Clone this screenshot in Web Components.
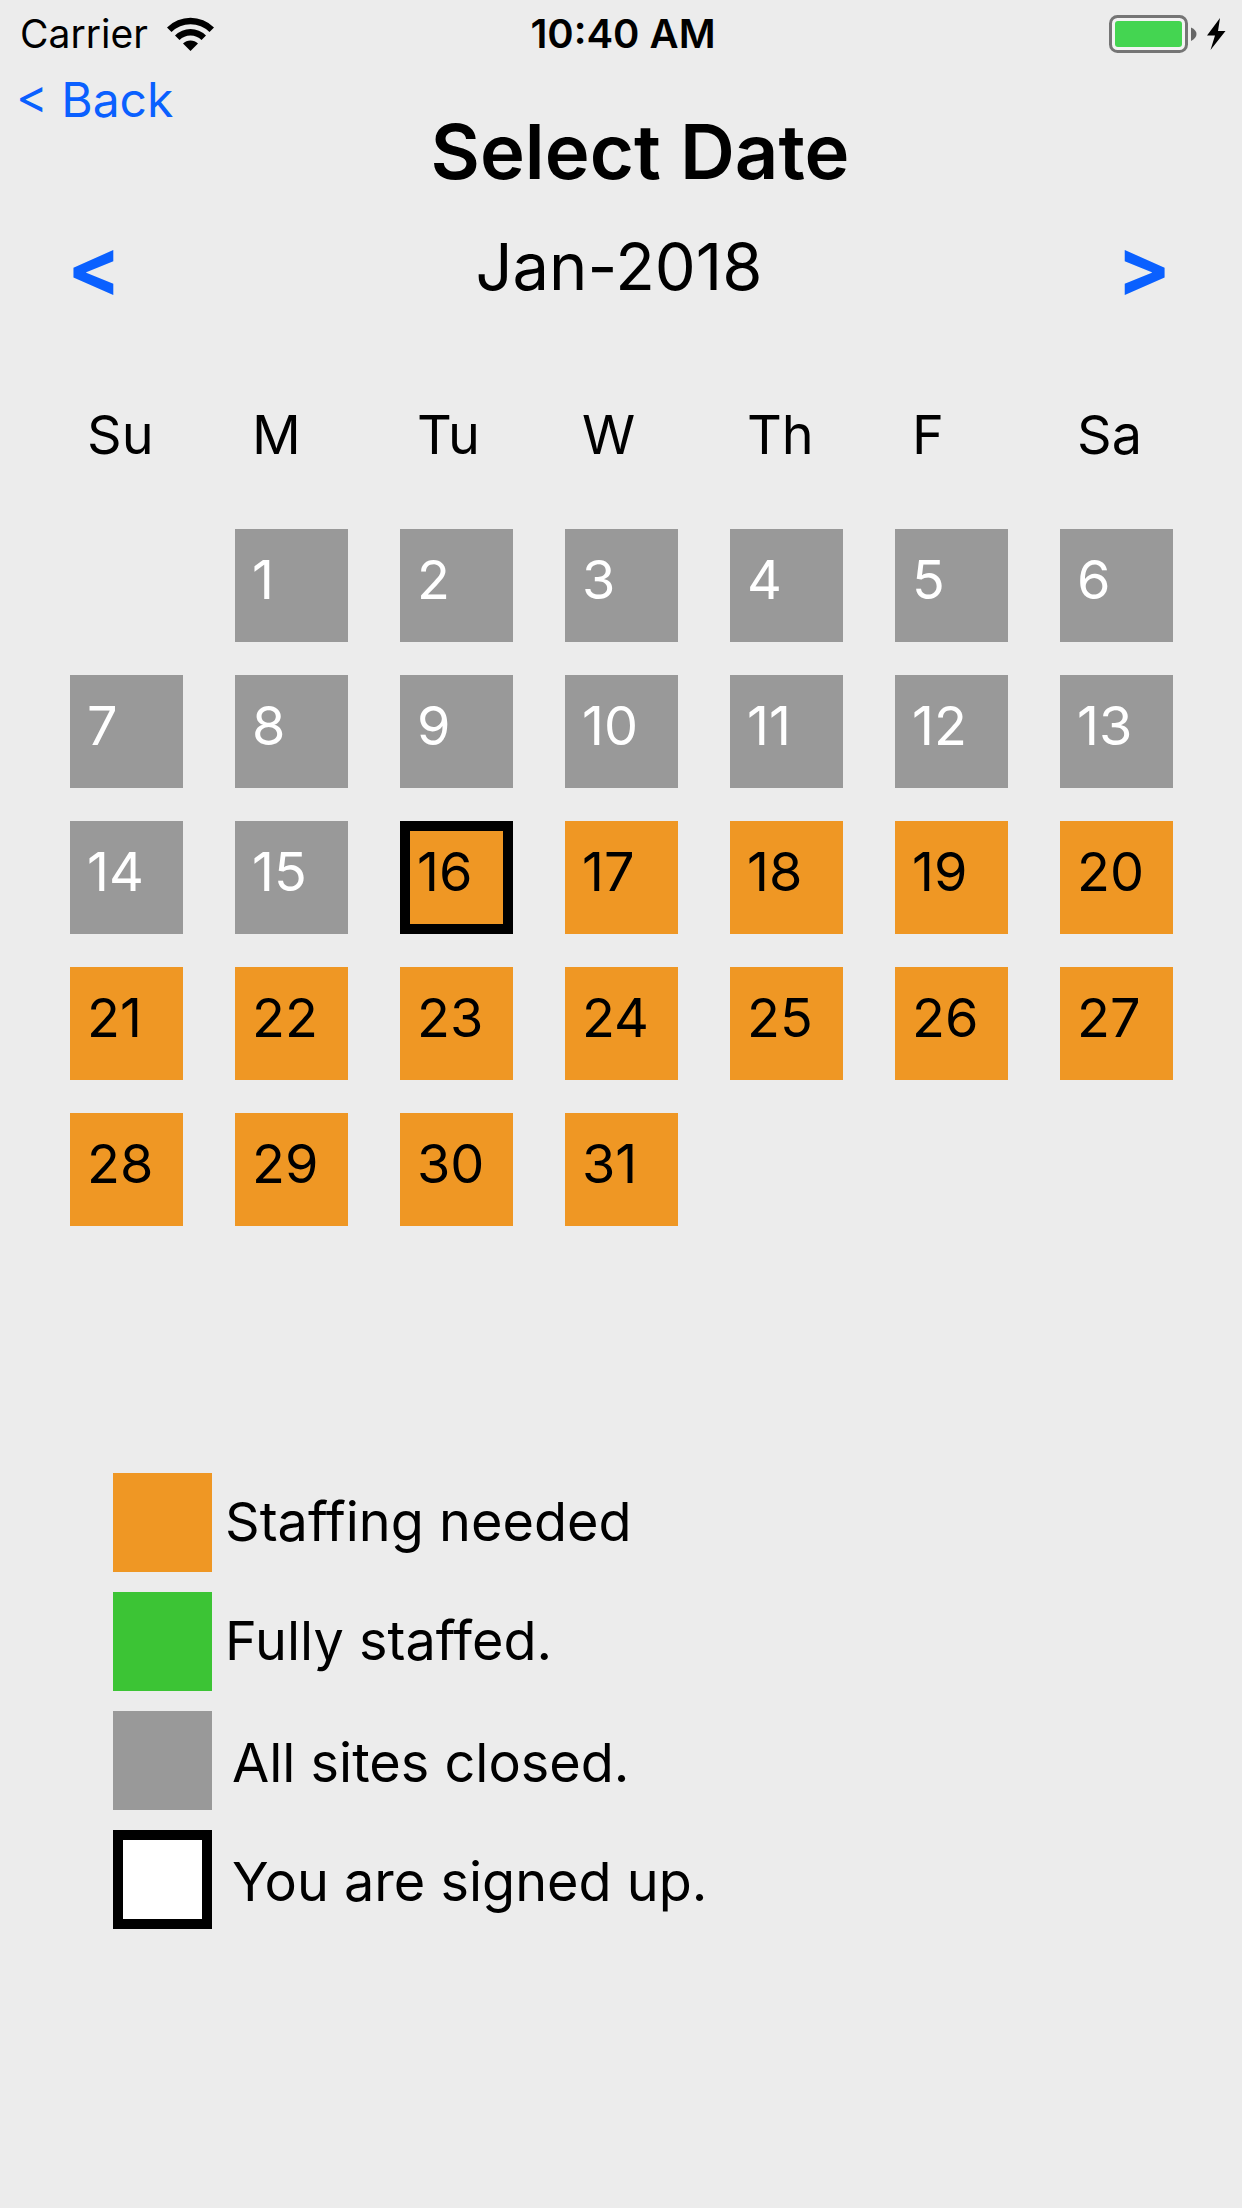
<!DOCTYPE html>
<html lang="en">
<head>
<meta charset="utf-8">
<meta name="viewport" content="width=device-width, initial-scale=1">
<title>Select Date</title>
<style>
  :root {
    --bg: #ececec;
    --link: #0a60ff;
    --needed: #ef9724;
    --staffed: #3cc435;
    --closed: #999999;
    --body: 54px;
  }
  body {
    margin: 0;
    min-height: 100vh;
    background: var(--bg);
    color: #000;
    font-family: Inter, "Liberation Sans", sans-serif;
  }
</style>
</head>
<body>
<select-date-page></select-date-page>

<script>
class StatusBar extends HTMLElement {
  constructor() {
    super();
    this.attachShadow({ mode: "open" }).innerHTML = `
      <style>
        :host { display: grid; grid-template-columns: 1fr auto 1fr; align-items: center;
                height: 68px; padding: 0 16px 0 20px; font-size: 39px; line-height: 48px; }
        .left, .right { display: flex; align-items: center; }
        .left { gap: 19px; }
        .right { justify-content: flex-end; gap: 10px; }
        time { font-size: 40px; font-weight: 600; }
        svg { display: block; }
      </style>
      <span class="left"><slot name="carrier"></slot>
        <svg width="47" height="34" viewBox="0 0 47 34" aria-label="Wi-Fi">
          <path d="M0 10.500 A33.500 33.500 0 0 1 47 10.500 L42.500 15 A27 27 0 0 0 4.500 15 Z"/>
          <path d="M8 18.500 A22 22 0 0 1 39 18.500 L34.500 23 A15.600 15.600 0 0 0 12.500 23 Z"/>
          <path d="M16 26.500 A10.600 10.600 0 0 1 31 26.500 L23.500 34 Z"/>
        </svg>
      </span>
      <time><slot></slot></time>
      <span class="right">
        <svg width="88" height="38" viewBox="0 0 88 38" aria-label="Battery full">
          <rect x="1.500" y="1.500" width="76" height="35" rx="7" fill="#f3f3f3" stroke="#757575" stroke-width="3"/>
          <rect x="6" y="6" width="67" height="26" rx="3" fill="#44d551"/>
          <path d="M82 12.500 Q87.500 15 87.500 19 T82 26 Z" fill="#666"/>
        </svg>
        <svg width="19" height="32" viewBox="0 0 19 32" aria-label="Charging">
          <path d="M13 0 L0 17.500 H8 L3.500 32 L18.500 13 H11 Z"/>
        </svg>
      </span>`;
  }
}

class PageHeader extends HTMLElement {
  constructor() {
    super();
    this.attachShadow({ mode: "open" }).innerHTML = `
      <style>
        :host { display: grid; grid-template-columns: 1fr auto 1fr; align-items: start; padding: 0 0 0 38px; }
        a { justify-self: start; margin-left: -22px; color: var(--link); text-decoration: none;
            font-size: 48px; line-height: 64px; }
        h1 { margin: 38px 0 0; font-size: 76px; line-height: 90px; font-weight: 600; }
      </style>
      <a href="#back">&lt; Back</a>
      <h1><slot></slot></h1>`;
  }
}

class MonthNav extends HTMLElement {
  constructor() {
    super();
    this.attachShadow({ mode: "open" }).innerHTML = `
      <style>
        :host { display: flex; justify-content: space-between; align-items: flex-start;
                margin-top: 31px; padding: 0 71px 0 67px; }
        button { border: 0; padding: 0; background: none; color: var(--link); font: inherit;
                 font-size: 80px; line-height: 80px; font-weight: 700; }
        h2 { margin: 0; font-size: 65px; line-height: 80px; font-weight: 400; }
      </style>
      <button type="button" title="Previous month">&lt;</button>
      <h2><slot></slot></h2>
      <button type="button" title="Next month">&gt;</button>`;
  }
}

class DayCell extends HTMLElement {
  constructor() {
    super();
    this.attachShadow({ mode: "open" }).innerHTML = `
      <style>
        :host { display: block; }
        button { display: block; box-sizing: border-box; width: 113px; height: 113px; border: 0;
                 padding: 17px 17px 28px; text-align: left; color: inherit; background: var(--needed);
                 font: inherit; font-size: var(--body); line-height: 68px; }
        :host([state=closed]) button { background: var(--closed); color: #fff; }
        :host([signed-up]) button { border: 10px solid #000; padding: 7px 7px 18px; }
      </style>
      <button type="button"><slot></slot></button>`;
  }
}

class MonthCalendar extends HTMLElement {
  constructor() {
    super();
    this.attachShadow({ mode: "open" });
  }
  connectedCallback() {
    const first = +this.getAttribute("first-weekday");
    const days = +this.getAttribute("days");
    const open = +this.getAttribute("open-from");
    const mine = +this.getAttribute("signed-up");
    let rows = "";
    for (let start = 1 - first; start <= days; start += 7) {
      rows += "<tr>";
      for (let d = start; d < start + 7; d++) {
        rows += d < 1 || d > days ? "<td></td>"
          : `<td><day-cell${d < open ? ' state="closed"' : ""}${d === mine ? " signed-up" : ""}>${d}</day-cell></td>`;
      }
      rows += "</tr>";
    }
    this.shadowRoot.innerHTML = `
      <style>
        :host { display: block; margin-top: 94px; padding: 0 17px 0 70px; }
        table { width: 100%; table-layout: fixed; border-collapse: collapse; }
        th { padding: 0 0 60px 17px; text-align: left; font-weight: 400;
             font-size: var(--body); line-height: 68px; }
        td { padding: 0 0 33px; vertical-align: top; }
      </style>
      <table>
        <thead><tr>${["Su", "M", "Tu", "W", "Th", "F", "Sa"].map(n => `<th scope="col">${n}</th>`).join("")}</tr></thead>
        <tbody>${rows}</tbody>
      </table>`;
  }
}

class LegendItem extends HTMLElement {
  constructor() {
    super();
    this.attachShadow({ mode: "open" }).innerHTML = `
      <style>
        :host { display: flex; align-items: center; gap: 13px; font-size: var(--body); line-height: 68px; }
        i { box-sizing: border-box; width: 99px; height: 99px; background: var(--needed); }
        span { padding-bottom: 2px; }
        :host([kind=staffed]) i { background: var(--staffed); }
        :host([kind=closed]) i { background: var(--closed); }
        :host([kind=mine]) i { background: #fff; border: 10px solid #000; }
        :host([kind=closed]) span, :host([kind=mine]) span { padding: 4px 0 0 7px; }
      </style>
      <i></i><span><slot></slot></span>`;
  }
}

class StatusLegend extends HTMLElement {
  constructor() {
    super();
    this.attachShadow({ mode: "open" }).innerHTML = `
      <style>
        :host { display: flex; flex-direction: column; gap: 20px; margin-top: 214px; padding: 0 113px; }
      </style>
      <slot></slot>`;
  }
}

class SelectDatePage extends HTMLElement {
  constructor() {
    super();
    this.attachShadow({ mode: "open" }).innerHTML = `
      <style>:host { display: block; }</style>
      <status-bar><span slot="carrier">Carrier</span>10:40 AM</status-bar>
      <page-header>Select Date</page-header>
      <month-nav>Jan-2018</month-nav>
      <month-calendar first-weekday="1" days="31" open-from="16" signed-up="16"></month-calendar>
      <status-legend>
        <legend-item kind="needed">Staffing needed</legend-item>
        <legend-item kind="staffed">Fully staffed.</legend-item>
        <legend-item kind="closed">All sites closed.</legend-item>
        <legend-item kind="mine">You are signed up.</legend-item>
      </status-legend>`;
  }
}

customElements.define("status-bar", StatusBar);
customElements.define("page-header", PageHeader);
customElements.define("month-nav", MonthNav);
customElements.define("day-cell", DayCell);
customElements.define("month-calendar", MonthCalendar);
customElements.define("legend-item", LegendItem);
customElements.define("status-legend", StatusLegend);
customElements.define("select-date-page", SelectDatePage);
</script>
</body>
</html>
